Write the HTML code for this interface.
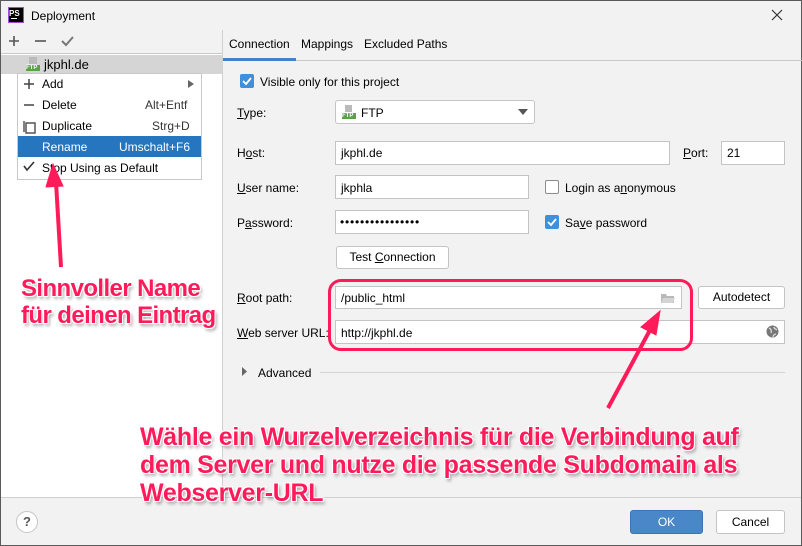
<!DOCTYPE html>
<html><head><meta charset="utf-8"><style>
*{box-sizing:border-box;margin:0;padding:0}
body{width:802px;height:546px;position:relative;overflow:hidden;background:#f2f2f2;font-family:"Liberation Sans",sans-serif;font-size:12px;color:#000}
.a{position:absolute}
.t{position:absolute;white-space:nowrap;line-height:14px}
.f{position:absolute;background:#fff;border:1px solid #c4c4c4}
.b{position:absolute;background:#fff;border:1px solid #c4c4c4;border-radius:3px;text-align:center}
.cb{position:absolute;width:14px;height:14px;border-radius:2px;background:#3f8fdd}
.cbe{position:absolute;width:14px;height:14px;border-radius:2px;background:#fff;border:1px solid #8c8c8c}
u{text-decoration:underline}
.p{position:absolute;white-space:nowrap;font-weight:bold;font-size:25px;color:#ff1a5a;letter-spacing:-0.3px;text-shadow:1px 1px 0 #fff,-1px -1px 0 #fff,1px -1px 0 #fff,-1px 1px 0 #fff,2px 3px 3px rgba(0,0,0,.35);line-height:28px}
</style></head><body>
<div class="a" style="left:0;top:0;width:802px;height:546px;border:1px solid #5a5a5a"></div>
<div class="a" style="left:8px;top:7px;width:16px;height:16px;background:#000;border:1px solid #9b4fd6"></div>
<div class="t" style="left:9px;top:7px;color:#fff;font-size:8px;font-weight:bold">PS</div>
<div class="a" style="left:11px;top:18px;width:6px;height:1px;background:#fff"></div>
<div class="t" style="left:31px;top:9px;font-size:12px">Deployment</div>
<svg class="a" style="left:771px;top:9px" width="12" height="12"><path d="M1 1L11 11M11 1L1 11" stroke="#333" stroke-width="1.2"/></svg>
<svg class="a" style="left:7px;top:34px" width="70" height="14"><path d="M7 2v10M2 7h10" stroke="#555" stroke-width="1.6"/><path d="M28 7h11" stroke="#555" stroke-width="1.6"/><path d="M55 7l4 4 7-8" stroke="#777" stroke-width="2" fill="none"/></svg>
<div class="a" style="left:1px;top:53px;width:222px;height:1px;background:#c9c9c9"></div>
<div class="a" style="left:1px;top:54px;width:222px;height:443px;background:#fff"></div>
<div class="a" style="left:222px;top:30px;width:1px;height:467px;background:#d0d0d0"></div>
<div class="a" style="left:1px;top:55px;width:221px;height:19px;background:#d5d5d5"></div>
<div class="a" style="left:29px;top:57px;width:8px;height:7px;background:#bbb"></div>
<div class="a" style="left:26px;top:65px;width:14px;height:6px;background:#5aa345;color:#fff;font-size:6px;line-height:6px;font-weight:bold">FTP</div>
<div class="t" style="left:44px;top:58px;font-size:13px">jkphl.de</div>
<div class="a" style="left:17px;top:73px;width:185px;height:107px;background:#fff;border:1px solid #c8c8c8"></div>
<div class="a" style="left:18px;top:136px;width:183px;height:21px;background:#2675bf"></div>
<svg class="a" style="left:22px;top:77px" width="14" height="100"><path d="M7 2v10M2 7h10" stroke="#444" stroke-width="1.5"/><path d="M2 28h10" stroke="#444" stroke-width="1.5"/><rect x="4" y="46" width="9" height="10" fill="none" stroke="#555" stroke-width="1.5"/><path d="M2 44v11" stroke="#555" stroke-width="1.5"/><path d="M2 89l3 4 7-8" stroke="#333" stroke-width="1.6" fill="none"/></svg>
<div class="t" style="left:42px;top:77px">Add</div>
<svg class="a" style="left:187px;top:79px" width="8" height="10"><path d="M1 1l6 4-6 4z" fill="#666"/></svg>
<div class="t" style="left:42px;top:98px">Delete</div><div class="t" style="left:145px;top:98px;color:#333">Alt+Entf</div>
<div class="t" style="left:42px;top:119px">Duplicate</div><div class="t" style="left:152px;top:119px;color:#333">Strg+D</div>
<div class="t" style="left:42px;top:140px;color:#fff">Rename</div><div class="t" style="left:119px;top:140px;color:#fff">Umschalt+F6</div>
<div class="t" style="left:42px;top:161px">Stop Using as Default</div>
<div class="t" style="left:229px;top:37px">Connection</div>
<div class="t" style="left:301px;top:37px">Mappings</div>
<div class="t" style="left:364px;top:37px">Excluded Paths</div>
<div class="a" style="left:223px;top:60px;width:579px;height:1px;background:#c9c9c9"></div>
<div class="a" style="left:223px;top:58px;width:73px;height:3px;background:#4083c9"></div>
<div class="cb" style="left:240px;top:74px"></div><svg class="a" style="left:240px;top:74px" width="14" height="14"><path d="M3 7l3 3 5-6" stroke="#fff" stroke-width="1.8" fill="none"/></svg>
<div class="t" style="left:260px;top:75px">Visible only for this project</div>
<div class="t" style="left:237px;top:106px"><u>T</u>ype:</div>
<div class="b" style="left:335px;top:100px;width:200px;height:24px"></div>
<div class="a" style="left:345px;top:105px;width:7px;height:7px;background:#bbb"></div>
<div class="a" style="left:342px;top:113px;width:14px;height:6px;background:#5aa345;color:#fff;font-size:6px;line-height:6px;font-weight:bold">FTP</div>
<div class="t" style="left:361px;top:106px">FTP</div>
<svg class="a" style="left:518px;top:109px" width="10" height="6"><path d="M0 0h10L5 6z" fill="#555"/></svg>
<div class="t" style="left:237px;top:146px">H<u>o</u>st:</div>
<div class="f" style="left:335px;top:141px;width:335px;height:24px"></div>
<div class="t" style="left:341px;top:146px">jkphl.de</div>
<div class="t" style="left:683px;top:146px"><u>P</u>ort:</div>
<div class="f" style="left:721px;top:141px;width:64px;height:24px"></div>
<div class="t" style="left:727px;top:146px">21</div>
<div class="t" style="left:237px;top:181px"><u>U</u>ser name:</div>
<div class="f" style="left:335px;top:175px;width:194px;height:24px"></div>
<div class="t" style="left:341px;top:181px">jkphla</div>
<div class="cbe" style="left:545px;top:180px"></div>
<div class="t" style="left:565px;top:181px">Login as a<u>n</u>onymous</div>
<div class="t" style="left:237px;top:216px">P<u>a</u>ssword:</div>
<div class="f" style="left:335px;top:210px;width:194px;height:24px"></div>
<div class="t" style="left:340px;top:215px;font-size:12px;letter-spacing:0.8px">••••••••••••••••</div>
<div class="cb" style="left:545px;top:215px"></div><svg class="a" style="left:545px;top:215px" width="14" height="14"><path d="M3 7l3 3 5-6" stroke="#fff" stroke-width="1.8" fill="none"/></svg>
<div class="t" style="left:565px;top:216px">Sa<u>v</u>e password</div>
<div class="b" style="left:336px;top:246px;width:113px;height:23px;line-height:21px">Test <u>C</u>onnection</div>
<div class="t" style="left:237px;top:291px"><u>R</u>oot path:</div>
<div class="f" style="left:335px;top:286px;width:347px;height:23px"></div>
<div class="t" style="left:341px;top:291px">/public_html</div>
<svg class="a" style="left:660px;top:292px" width="16" height="12"><path d="M1 2h5l1 2h7v7H1z" fill="#b9b9b9"/><path d="M3 6h12l-2 5H1z" fill="#d4d4d4"/></svg>
<div class="b" style="left:698px;top:286px;width:87px;height:23px;line-height:21px">Autodetect</div>
<div class="t" style="left:237px;top:326px"><u>W</u>eb server URL:</div>
<div class="f" style="left:335px;top:320px;width:450px;height:24px"></div>
<div class="t" style="left:341px;top:326px">http://jkphl.de</div>
<svg class="a" style="left:766px;top:325px" width="13" height="13"><circle cx="6.5" cy="6.5" r="6" fill="#777"/><path d="M3 3c2 1 3 3 2 5M8 2c0 2 2 2 3 3M7 12c0-2 2-3 3-3" stroke="#ddd" stroke-width="1.3" fill="none"/></svg>
<svg class="a" style="left:242px;top:367px" width="6" height="9"><path d="M0 0l5 4.5L0 9z" fill="#666"/></svg>
<div class="t" style="left:258px;top:366px">Advanced</div>
<div class="a" style="left:320px;top:372px;width:465px;height:1px;background:#d4d4d4"></div>
<div class="a" style="left:1px;top:497px;width:800px;height:1px;background:#d0d0d0"></div>
<div class="a" style="left:16px;top:511px;width:22px;height:22px;border-radius:50%;background:#fff;border:1px solid #c4c4c4;text-align:center;line-height:20px;color:#555;font-weight:bold;font-size:13px">?</div>
<div class="a" style="left:630px;top:510px;width:73px;height:24px;border-radius:3px;background:#4a87c8;border:1px solid #3b75b4;color:#fff;text-align:center;line-height:22px">OK</div>
<div class="b" style="left:716px;top:510px;width:69px;height:24px;line-height:22px">Cancel</div>
<div class="a" style="left:328px;top:279px;width:365px;height:72px;border:3px solid #ff1a5a;border-radius:13px"></div>
<svg class="a" style="left:0;top:0" width="802" height="546">
<g fill="#ff1a5a" stroke="#ff1a5a">
<path d="M61 267L56 182" stroke-width="4"/><path d="M53 164L46 187L63 186Z" stroke-width="1"/>
<path d="M608 408L650 330" stroke-width="4"/><path d="M660 311L641 327L656 335Z" stroke-width="1"/>
</g></svg>
<div class="p" style="left:21px;top:275px;font-size:24px;letter-spacing:-0.6px">Sinnvoller Name</div>
<div class="p" style="left:21px;top:302px;font-size:24px;letter-spacing:-0.6px">für deinen Eintrag</div>
<div class="p" style="left:140px;top:423px">Wähle ein Wurzelverzeichnis für die Verbindung auf</div>
<div class="p" style="left:140px;top:451px">dem Server und nutze die passende Subdomain als</div>
<div class="p" style="left:140px;top:479px">Webserver-URL</div>
</body></html>
